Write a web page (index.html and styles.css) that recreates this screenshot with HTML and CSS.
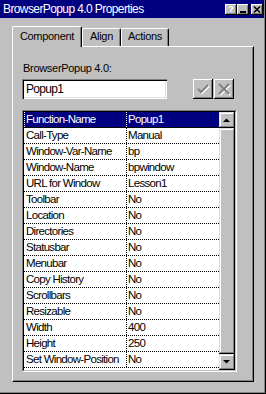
FILE: index.html
```html
<!DOCTYPE html>
<html lang="en">
<head>
    <meta charset="UTF-8">
    <title>BrowserPopup 4.0 Properties</title>
    <link rel="stylesheet" href="styles.css">
</head>
<body>
    <div class="window">
        <div class="titlebar">
            <span class="title">BrowserPopup 4.0 Properties</span>
            <div class="cap-btns">
                <div class="cap-btn help">?</div>
                <div class="cap-btn">
                    <svg width="12" height="11" viewBox="0 0 12 11"><rect x="3" y="7" width="6" height="2" fill="#000"/></svg>
                </div>
                <div class="cap-btn close">
                    <svg width="12" height="11" viewBox="0 0 12 11"><path d="M3 2.5 L9 8.5 M9 2.5 L3 8.5" stroke="#000" stroke-width="1.6"/></svg>
                </div>
            </div>
        </div>

        <div class="client">
            <div class="tabs">
                <div class="tab active" style="width: 70px">Component</div>
                <div class="tab" style="width: 39px">Align</div>
                <div class="tab" style="width: 48px">Actions</div>
            </div>

            <div class="panel">
                <div class="label">BrowserPopup 4.0:</div>
                <div class="name-row">
                    <div class="textbox">Popup1</div>
                    <div class="tool-btn">
                        <svg width="20" height="20" viewBox="0 0 20 20">
                            <path d="M5 10 L8 13 L15 6" fill="none" stroke="#fff" stroke-width="2" transform="translate(1 1)"/>
                            <path d="M5 10 L8 13 L15 6" fill="none" stroke="#808080" stroke-width="2"/>
                        </svg>
                    </div>
                    <div class="tool-btn">
                        <svg width="20" height="20" viewBox="0 0 20 20">
                            <path d="M5 5 L15 15 M15 5 L5 15" fill="none" stroke="#fff" stroke-width="2" transform="translate(1 1)"/>
                            <path d="M5 5 L15 15 M15 5 L5 15" fill="none" stroke="#808080" stroke-width="2"/>
                        </svg>
                    </div>
                </div>

                <div class="list">
                    <div class="list-inner">
                        <div class="grid">
                            <div class="row sel"><div class="key">Function-Name</div><div class="val">Popup1</div></div>
                            <div class="row"><div class="key">Call-Type</div><div class="val">Manual</div></div>
                            <div class="row"><div class="key">Window-Var-Name</div><div class="val">bp</div></div>
                            <div class="row"><div class="key">Window-Name</div><div class="val">bpwindow</div></div>
                            <div class="row"><div class="key">URL for Window</div><div class="val">Lesson1</div></div>
                            <div class="row"><div class="key">Toolbar</div><div class="val">No</div></div>
                            <div class="row"><div class="key">Location</div><div class="val">No</div></div>
                            <div class="row"><div class="key">Directories</div><div class="val">No</div></div>
                            <div class="row"><div class="key">Statusbar</div><div class="val">No</div></div>
                            <div class="row"><div class="key">Menubar</div><div class="val">No</div></div>
                            <div class="row"><div class="key">Copy History</div><div class="val">No</div></div>
                            <div class="row"><div class="key">Scrollbars</div><div class="val">No</div></div>
                            <div class="row"><div class="key">Resizable</div><div class="val">No</div></div>
                            <div class="row"><div class="key">Width</div><div class="val">400</div></div>
                            <div class="row"><div class="key">Height</div><div class="val">250</div></div>
                            <div class="row"><div class="key">Set Window-Position</div><div class="val">No</div></div>
                        </div>
                        <div class="scrollbar">
                            <div class="sb-btn">
                                <svg width="16" height="16" viewBox="0 0 16 16"><path d="M4 10 L11 10 L7.5 6.5 Z" fill="#000"/></svg>
                            </div>
                            <div class="sb-thumb"></div>
                            <div class="sb-btn">
                                <svg width="16" height="16" viewBox="0 0 16 16"><path d="M4 6 L11 6 L7.5 9.5 Z" fill="#000"/></svg>
                            </div>
                        </div>
                    </div>
                </div>
            </div>
        </div>
    </div>
</body>
</html>
```

FILE: styles.css
```css
body {
    margin: 0;
    background-color: #c0c0c0;
    font-family: "Liberation Sans", Arial, sans-serif;
    font-size: 11px;
    color: #000;
}
.window {
    width: 266px;
    height: 394px;
    box-sizing: border-box;
    background-color: #c0c0c0;
    border-right: 1px solid #000;
    border-bottom: 1px solid #000;
    box-shadow: inset -1px -1px #808080;
    display: flex;
    flex-direction: column;
}
.titlebar {
    height: 18px;
    margin-right: 1px;
    background-color: #000080;
    color: #fff;
    display: flex;
    align-items: center;
    padding-left: 3px;
}
.title {
    font-size: 12px;
    letter-spacing: -0.6px;
}
.cap-btns {
    margin-left: auto;
    margin-right: 1px;
    display: flex;
}
.cap-btn {
    width: 12px;
    height: 11px;
    background-color: #c0c0c0;
    box-shadow: inset -1px -1px #000, inset 1px 1px #fff, inset -2px -2px #808080;
    font-weight: bold;
    font-size: 9px;
    line-height: 11px;
    text-align: center;
}
.cap-btn svg {
    display: block;
}
.cap-btn.close {
    margin-left: 2px;
}
.client {
    padding: 8px 10px 0 12px;
}
.tabs {
    display: flex;
    align-items: flex-end;
    height: 20px;
}
.tab {
    height: 18px;
    box-sizing: border-box;
    border: 1px solid #fff;
    border-right-color: #000;
    border-bottom: none;
    border-radius: 2px 2px 0 0;
    box-shadow: inset -1px 0 #808080;
    text-align: center;
    padding-top: 1px;
    letter-spacing: -0.3px;
    line-height: 13px;
}
.tab.active {
    height: 21px;
    margin-bottom: -1px;
    position: relative;
    z-index: 1;
    background-color: #c0c0c0;
    padding-top: 3px;
}
.panel {
    width: 242px;
    height: 336px;
    box-sizing: border-box;
    border: 1px solid #fff;
    border-right-color: #000;
    border-bottom-color: #000;
    box-shadow: inset -1px -1px #808080;
    padding: 15px 0 0 9px;
}
.label {
    padding-left: 1px;
    line-height: 13px;
    letter-spacing: -0.3px;
}
.name-row {
    display: flex;
    margin-top: 4px;
}
.textbox {
    width: 145px;
    height: 20px;
    box-sizing: border-box;
    background-color: #fff;
    box-shadow: inset 1px 1px #808080, inset 2px 2px #000, inset -1px -1px #fff, inset -2px -2px #dfdfdf;
    padding: 3px 4px 0;
    font-size: 12px;
    letter-spacing: -0.7px;
    line-height: 14px;
}
.tool-btn {
    width: 20px;
    height: 20px;
    margin-left: 1px;
    background-color: #c0c0c0;
    box-shadow: inset -1px -1px #000, inset 1px 1px #fff, inset -2px -2px #808080;
}
.textbox + .tool-btn {
    margin-left: 26px;
}
.tool-btn svg {
    display: block;
}
.list {
    margin-top: 11px;
    width: 215px;
    height: 262px;
    box-sizing: border-box;
    border: 1px solid #808080;
    border-right-color: #fff;
    border-bottom-color: #fff;
}
.list-inner {
    height: 100%;
    box-sizing: border-box;
    border: 1px solid #000;
    border-right-color: #c0c0c0;
    border-bottom-color: #c0c0c0;
    display: flex;
}
.grid {
    flex: 1;
    background-color: #fff;
    font-size: 11.5px;
    letter-spacing: -0.7px;
    line-height: 15px;
}
.row {
    display: flex;
    height: 16px;
    box-sizing: border-box;
    border-bottom: 1px dotted #000;
    white-space: nowrap;
}
.key {
    width: 102px;
    box-sizing: border-box;
    padding-left: 2px;
    overflow: hidden;
}
.val {
    flex: 1;
    border-left: 1px dotted #000;
    padding-left: 1px;
}
.row.sel {
    background-color: #000080;
    color: #fff;
}
.row.sel .key {
    border-left: 1px dotted #fff;
    padding-left: 1px;
}
.row.sel .val {
    border-left-color: #fff;
}
.scrollbar {
    width: 16px;
    display: flex;
    flex-direction: column;
}
.sb-btn, .sb-thumb {
    background-color: #c0c0c0;
    box-shadow: inset -1px -1px #000, inset 1px 1px #dfdfdf, inset -2px -2px #808080, inset 2px 2px #fff;
}
.sb-btn {
    height: 16px;
}
.sb-btn svg {
    display: block;
}
.sb-thumb {
    flex: 1;
}
```
